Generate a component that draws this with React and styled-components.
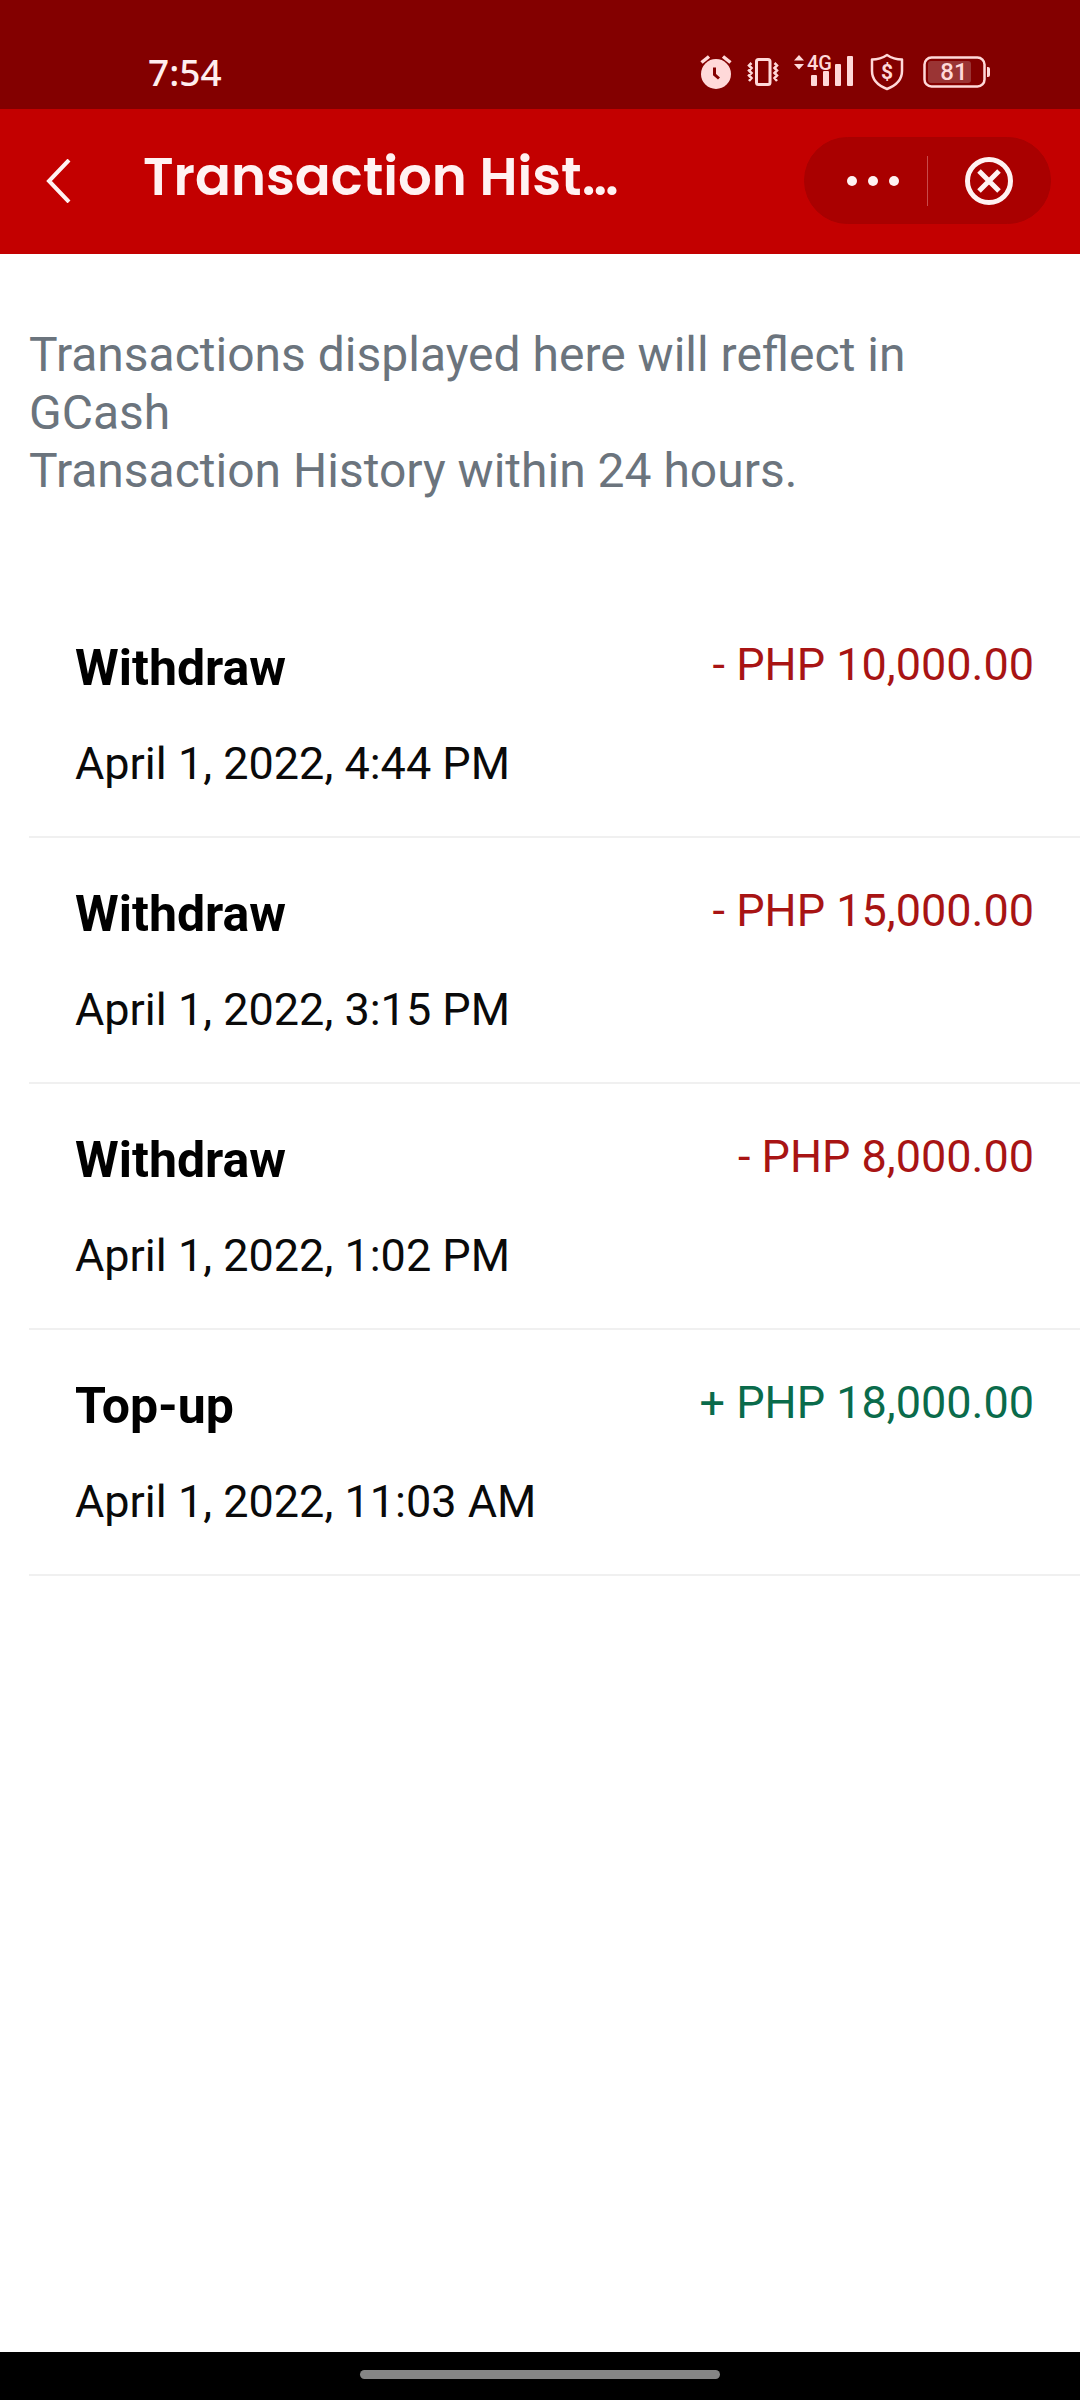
import React from "react";
import styled, { createGlobalStyle } from "styled-components";

const GlobalStyle = createGlobalStyle`
  * {
    box-sizing: border-box;
  }

  body {
    margin: 0;
    background: #ffffff;
    font-family: Roboto, "Liberation Sans", sans-serif;
  }
`;

const Screen = styled.div`
  display: flex;
  flex-direction: column;
  min-height: 100vh;
`;

const StatusBar = styled.div`
  display: flex;
  justify-content: space-between;
  align-items: flex-end;
  padding: 47px 90px 13px 148px;
  background: #830000;
`;

const Clock = styled.time`
  font-family: "Noto Sans", sans-serif;
  font-size: 37px;
  font-weight: 500;
  line-height: 49px;
  color: #ffeeee;
`;

const StatusIcons = styled.div`
  display: flex;
  align-items: center;
  gap: 15px;
  height: 49px;
`;

const StatusIcon = styled.svg`
  display: block;
  color: #ffd9d9;
`;

const Header = styled.header`
  display: flex;
  align-items: center;
  padding: 28px 29px 30px;
  background: #c30000;
`;

const IconButton = styled.button`
  display: flex;
  align-items: center;
  justify-content: center;
  flex: ${(props) => props.$grow || "none"};
  height: 100%;
  padding: 0;
  border: 0;
  background: transparent;
  color: #fff2f2;
`;

const BackButton = styled(IconButton)`
  width: 57px;
  height: 86px;
`;

const PageTitle = styled.h1`
  flex: 1;
  margin: 0 0 8px 57px;
  font-family: Poppins, Inter, sans-serif;
  font-size: 53px;
  font-weight: 600;
  line-height: 72px;
  color: #fff2f2;
  white-space: nowrap;
`;

const Capsule = styled.div`
  display: flex;
  align-items: center;
  width: 247px;
  height: 87px;
  border: 1px solid #a80000;
  border-radius: 44px;
  background: #a90000;
`;

const CapsuleDivider = styled.span`
  width: 1px;
  height: 50px;
  background: #c94a4a;
`;

const Content = styled.main`
  flex: 1;
  padding: 72px 0 48px 29px;
`;

const Notice = styled.p`
  margin: 0 120px 0 0;
  font-size: 48px;
  line-height: 58px;
  color: #6b747d;
`;

const TransactionList = styled.ul`
  margin: 92px 0 0;
  padding: 0;
  list-style: none;
`;

const TransactionRow = styled.li`
  display: grid;
  grid-template-columns: 1fr auto;
  row-gap: 40px;
  padding: 46px;
  border-bottom: 2px solid #f0f0f0;
`;

const TransactionType = styled.h2`
  margin: 0;
  font-size: 50px;
  font-weight: 700;
  line-height: 60px;
  color: #000000;
`;

const Amount = styled.span`
  font-size: 45px;
  line-height: 54px;
  color: ${(props) => (props.$credit ? "#0a6b4b" : "#a81414")};
`;

const TransactionDate = styled.time`
  font-size: 45px;
  line-height: 52px;
  color: #0a0a0a;
`;

const NavigationBar = styled.div`
  display: flex;
  justify-content: center;
  padding: 18px 0 21px;
  background: #000000;
`;

const HomeIndicator = styled.div`
  width: 360px;
  height: 9px;
  border-radius: 5px;
  background: #858585;
`;

const transactions = [
  { type: "Withdraw", amount: "- PHP 10,000.00", date: "April 1, 2022, 4:44 PM" },
  { type: "Withdraw", amount: "- PHP 15,000.00", date: "April 1, 2022, 3:15 PM" },
  { type: "Withdraw", amount: "- PHP 8,000.00", date: "April 1, 2022, 1:02 PM" },
  { type: "Top-up", amount: "+ PHP 18,000.00", date: "April 1, 2022, 11:03 AM", credit: true },
];

function AlarmIcon() {
  return (
    <StatusIcon width="32" height="36" viewBox="0 0 32 36" fill="none" stroke="currentColor">
      <circle cx="16" cy="20" r="15" fill="currentColor" stroke="none" />
      <path d="M1.500 8.500L9 2.500M30.500 8.500L23 2.500" strokeWidth="3.500" />
      <path d="M14.500 13.500V20.500L19 24.500" stroke="#830000" strokeWidth="3" />
    </StatusIcon>
  );
}

function VibrateIcon() {
  return (
    <StatusIcon width="32" height="30" viewBox="0 0 32 30" fill="none" stroke="currentColor">
      <rect x="9.500" y="2.500" width="13.500" height="25" rx="2" strokeWidth="3" />
      <path
        d="M4.500 6L2 8.500L4.500 11L2 13.500L4.500 16L2 18.500L4.500 21L2 24M27.500 6L30 8.500L27.500 11L30 13.500L27.500 16L30 18.500L27.500 21L30 24"
        strokeWidth="2.500"
      />
    </StatusIcon>
  );
}

function SignalIcon() {
  return (
    <StatusIcon width="60" height="48" viewBox="0 -6 60 48" fill="currentColor">
      <path d="M0 6.500L5 1L10 6.500zM0 10H10L5 15.500z" />
      <text x="13" y="16" fontFamily="Roboto, sans-serif" fontSize="20" fontWeight="500">
        4G
      </text>
      <rect x="17" y="21" width="6" height="11" rx="1" />
      <rect x="29" y="17" width="6" height="15" rx="1" />
      <rect x="41" y="10" width="6" height="22" rx="1" />
      <rect x="53" y="2" width="6" height="30" rx="1" />
    </StatusIcon>
  );
}

function ShieldIcon() {
  return (
    <StatusIcon width="38" height="38" viewBox="-1 0 38 38" fill="none" stroke="currentColor">
      <path
        d="M17 2C21.500 5 26.500 6.500 32 6.500V18C32 27 26 32.500 17 36C8 32.500 2 27 2 18V6.500C7.500 6.500 12.500 5 17 2Z"
        strokeWidth="2.500"
        strokeLinejoin="round"
      />
      <text
        x="17"
        y="26"
        textAnchor="middle"
        fontFamily="Roboto, sans-serif"
        fontSize="21"
        fontWeight="700"
        fill="currentColor"
        stroke="none"
      >
        $
      </text>
    </StatusIcon>
  );
}

function BatteryIcon() {
  return (
    <StatusIcon width="68" height="32" viewBox="0 0 68 32" fill="none">
      <rect x="6" y="5" width="43" height="22" rx="3" fill="#9a3434" />
      <rect x="2.500" y="1.500" width="60" height="29" rx="7" stroke="currentColor" strokeWidth="2.500" />
      <path d="M65 11H66Q68 11 68 13V19Q68 21 66 21H65z" fill="currentColor" />
      <text
        x="32"
        y="24"
        textAnchor="middle"
        fontFamily="Roboto, sans-serif"
        fontSize="24"
        fontWeight="500"
        fill="currentColor"
      >
        81
      </text>
    </StatusIcon>
  );
}

function Transaction({ type, amount, date, credit }) {
  return (
    <TransactionRow>
      <TransactionType>{type}</TransactionType>
      <Amount $credit={credit}>{amount}</Amount>
      <TransactionDate>{date}</TransactionDate>
    </TransactionRow>
  );
}

function App() {
  return (
    <Screen>
      <GlobalStyle />
      <StatusBar>
        <Clock>7:54</Clock>
        <StatusIcons>
          <AlarmIcon />
          <VibrateIcon />
          <SignalIcon />
          <ShieldIcon />
          <BatteryIcon />
        </StatusIcons>
      </StatusBar>
      <Header>
        <BackButton type="button" aria-label="Back">
          <svg width="26" height="44" viewBox="0 0 26 44" fill="none" stroke="currentColor" strokeWidth="4">
            <path d="M24 1L4 22L24 43" />
          </svg>
        </BackButton>
        <PageTitle>Transaction Hist…</PageTitle>
        <Capsule>
          <IconButton type="button" aria-label="More options" $grow="1">
            <svg width="65" height="10" viewBox="-13 0 65 10" fill="currentColor">
              <circle cx="5" cy="5" r="5" />
              <circle cx="26" cy="5" r="5" />
              <circle cx="47" cy="5" r="5" />
            </svg>
          </IconButton>
          <CapsuleDivider />
          <IconButton type="button" aria-label="Close" $grow="1">
            <svg width="48" height="48" viewBox="0 0 48 48" fill="none" stroke="currentColor">
              <circle cx="24" cy="24" r="21.500" strokeWidth="5" />
              <path d="M14 14L34 34M34 14L14 34" strokeWidth="5" />
            </svg>
          </IconButton>
        </Capsule>
      </Header>
      <Content>
        <Notice>
          Transactions displayed here will reflect in GCash
          <br />
          Transaction History within 24 hours.
        </Notice>
        <TransactionList>
          {transactions.map((item) => (
            <Transaction key={item.date} {...item} />
          ))}
        </TransactionList>
      </Content>
      <NavigationBar>
        <HomeIndicator />
      </NavigationBar>
    </Screen>
  );
}

export default App;
